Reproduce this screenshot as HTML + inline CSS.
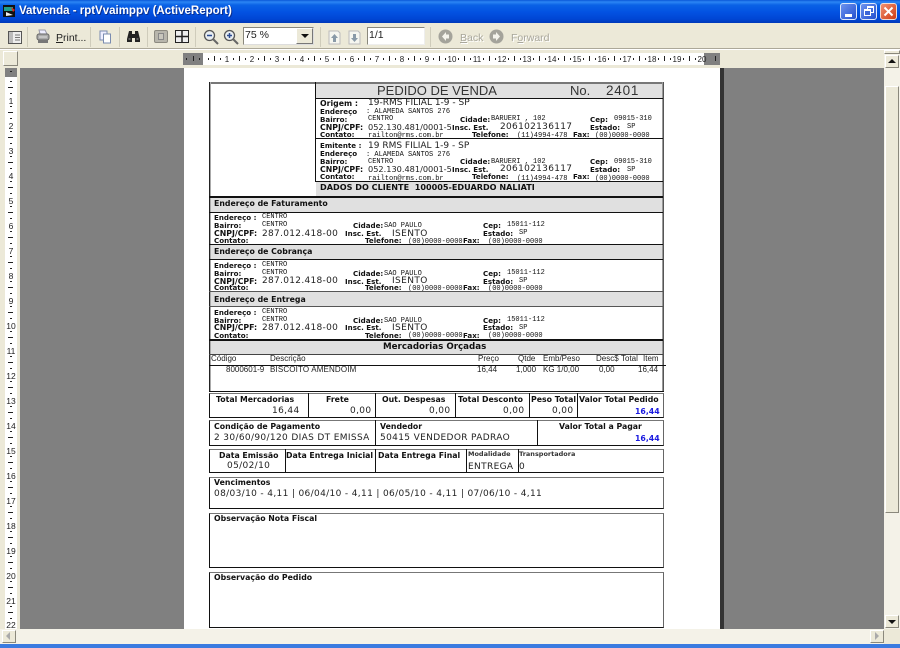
<!DOCTYPE html>
<html><head><meta charset="utf-8"><style>
html,body{margin:0;padding:0}
body{width:900px;height:648px;overflow:hidden;background:#ece9d8;position:relative;font-family:"Liberation Sans",sans-serif}
div,span,svg{position:absolute}
.t,.b,.r,.m,.s,.v{white-space:nowrap;height:12px;line-height:12px;color:#111}
.b{font:bold 7.8px/12px "DejaVu Sans",sans-serif;margin-top:1px}
.c{font-size:7.1px}
.h{font:bold 7.8px/12px "DejaVu Sans",sans-serif;white-space:nowrap;height:12px;color:#111;margin-top:1px}
.r{font:9px/12px "DejaVu Sans",sans-serif;color:#222;margin-top:1px}
.n{font:8.2px/12px "DejaVu Sans",sans-serif;color:#222;white-space:nowrap;height:12px}
.m{font:7px/12px "Liberation Mono",monospace;color:#111}
.s{font:9px/12px "DejaVu Sans",sans-serif;color:#222;letter-spacing:.35px}
.k{font:8px/12px "Liberation Sans",sans-serif;white-space:nowrap;height:12px;color:#222}
.g{background:#e0e0e0}
.l{background:#111}
.box{box-sizing:border-box;border:1px solid #111;border-top-color:#777;border-right-color:#666}
.tb{font:10.5px/14px "Liberation Sans",sans-serif;color:#222;white-space:nowrap}
.sep{width:1px;height:20px;top:27px;background:#cfccbb}
.btn{box-sizing:border-box;background:#ece9d8;border:1px solid #fff;border-right-color:#8a887c;border-bottom-color:#8a887c}
.dith{background:#f4f2e8}
</style></head><body>

<!-- title bar -->
<div style="left:0;top:0;width:900px;height:23px;background:linear-gradient(#0a58d8 0,#2b86f4 2px,#0a62e6 5px,#0352e2 12px,#0046d4 19px,#0038b8 23px)"></div>
<svg style="left:3px;top:4px" width="14" height="14" viewBox="0 0 14 14"><rect x="0" y="1" width="12" height="12" fill="#111"/><path d="M1 3h9v4H1z" fill="#1f9e8a"/><path d="M3 8l7 3-7 1z" fill="#eee"/><path d="M8 3l4 3-2 2z" fill="#d22"/></svg>
<div style="left:19px;top:4px;height:15px;font:bold 11.5px/15px 'Liberation Sans',sans-serif;color:#fff;white-space:nowrap;text-shadow:1px 1px 0 #0a2f90">Vatvenda - rptVvaimppv (ActiveReport)</div>
<div style="left:840px;top:3px;width:17px;height:17px;box-sizing:border-box;border:1px solid #dfe8fb;border-radius:3px;background:linear-gradient(135deg,#6d93ee,#2450cf)"><div style="left:4px;top:10px;width:7px;height:3px;background:#fff"></div></div>
<div style="left:860px;top:3px;width:17px;height:17px;box-sizing:border-box;border:1px solid #dfe8fb;border-radius:3px;background:linear-gradient(135deg,#6d93ee,#2450cf)"><div style="left:6px;top:2px;width:7px;height:7px;box-sizing:border-box;border:1px solid #fff;border-top-width:2px"></div><div style="left:3px;top:5px;width:7px;height:7px;box-sizing:border-box;border:1px solid #fff;border-top-width:2px;background:#3c66d8"></div></div>
<div style="left:880px;top:3px;width:17px;height:17px;box-sizing:border-box;border:1px solid #f0dcd4;border-radius:3px;background:linear-gradient(135deg,#ee9070,#d23c14)"><svg style="left:2px;top:2px" width="11" height="11" viewBox="0 0 11 11"><path d="M1.5 1.5l8 8M9.500 1.500l-8 8" stroke="#fff" stroke-width="2"/></svg></div>

<!-- toolbar -->
<div style="left:0;top:23px;width:900px;height:26px;background:#ece9d8"></div>
<div style="left:0;top:48px;width:900px;height:1px;background:#aca899"></div>
<div style="left:0;top:49px;width:900px;height:1px;background:#fff"></div>
<svg style="left:8px;top:31px" width="14" height="13" viewBox="0 0 14 13"><rect x=".5" y=".5" width="13" height="12" fill="#eee" stroke="#555"/><rect x="1" y="1" width="4" height="11" fill="#bbb"/><path d="M7 4h5M7 6.500h5M7 9h5" stroke="#777"/></svg>
<div class="sep" style="left:27px"></div>
<svg style="left:36px;top:29px" width="14" height="16" viewBox="0 0 14 16"><path d="M3 1h6l2 4H4z" fill="#eef" stroke="#99a"/><rect x="1" y="5" width="12" height="6" rx="2" fill="#aaa" stroke="#666"/><path d="M2 11h10v3H2z" fill="#777"/><path d="M3 8h8" stroke="#ddd"/></svg>
<div class="tb" style="left:56px;top:31px"><u>P</u>rint...</div>
<div class="sep" style="left:90px"></div>
<svg style="left:99px;top:30px" width="13" height="14" viewBox="0 0 13 14"><rect x="1" y="1" width="7" height="9" fill="#eef" stroke="#7a8cb0"/><rect x="4.500" y="4" width="7" height="9" fill="#fff" stroke="#7a8cb0"/></svg>
<div class="sep" style="left:119px"></div>
<svg style="left:126px;top:30px" width="15" height="13" viewBox="0 0 15 13"><path d="M3 1h3v3h3V1h3l2 8v3H9V8H6v4H1V9z" fill="#222"/><path d="M2.500 9h2M10.500 9h2" stroke="#999"/></svg>
<div class="sep" style="left:147px"></div>
<div style="left:154px;top:30px;width:14px;height:13px;box-sizing:border-box;background:#b8b6ac;border:1px solid #8c8a80;border-radius:2px"><div style="left:3px;top:2px;width:6px;height:7px;border:1px solid #888;box-sizing:border-box;background:#c8c6bc"></div></div>
<svg style="left:175px;top:30px" width="14" height="13" viewBox="0 0 14 13"><rect x=".5" y=".5" width="13" height="12" fill="#eee" stroke="#222"/><path d="M7 1v11M1 6.500h12" stroke="#222" stroke-width="1.500"/></svg>
<div class="sep" style="left:195px"></div>
<svg style="left:203px;top:29px" width="16" height="16" viewBox="0 0 16 16"><circle cx="6.500" cy="6.500" r="5" fill="#e8edf0" stroke="#555" stroke-width="1.300"/><path d="M10 10l5 5" stroke="#666" stroke-width="2"/><path d="M4 6.500h5" stroke="#2b4a90" stroke-width="1.500"/></svg>
<svg style="left:223px;top:29px" width="16" height="16" viewBox="0 0 16 16"><circle cx="6.500" cy="6.500" r="5" fill="#e8edf0" stroke="#555" stroke-width="1.300"/><path d="M10 10l5 5" stroke="#666" stroke-width="2"/><path d="M4 6.500h5M6.500 4v5" stroke="#2b4a90" stroke-width="1.500"/></svg>
<div style="left:243px;top:27px;width:71px;height:18px;box-sizing:border-box;background:#fff;border:1px solid #8a887c;border-right-color:#ddd;border-bottom-color:#ddd"><div class="tb" style="left:1px;top:0">75 %</div><div style="right:0;top:0;width:17px;height:16px;background:#ece9d8;box-sizing:border-box;border:1px solid #fff;border-right-color:#777;border-bottom-color:#777"></div><div style="right:4px;top:6px;width:0;height:0;border:4px solid transparent;border-top:4px solid #111"></div></div>
<div class="sep" style="left:320px"></div>
<svg style="left:328px;top:30px" width="13" height="15" viewBox="0 0 13 15"><path d="M1 1h9l2 2v11H1z" fill="#f6f6f0" stroke="#bbb"/><path d="M6.500 4L3 8h2v4h3V8h2z" fill="#8a9aa8"/></svg>
<svg style="left:348px;top:30px" width="13" height="15" viewBox="0 0 13 15"><path d="M1 1h9l2 2v11H1z" fill="#f6f6f0" stroke="#bbb"/><path d="M6.500 12L3 8h2V4h3v4h2z" fill="#8a9aa8"/></svg>
<div style="left:367px;top:27px;width:58px;height:18px;box-sizing:border-box;background:#fff;border:1px solid #8a887c;border-right-color:#eee;border-bottom-color:#eee"><div class="tb" style="left:1px;top:0">1/1</div></div>
<div class="sep" style="left:430px"></div>
<svg style="left:438px;top:29px" width="15" height="15" viewBox="0 0 15 15"><circle cx="7.500" cy="7.500" r="7" fill="#a4a39b"/><path d="M8 3L4 7.500 8 12V9.500h3v-4H8z" fill="#f4f3ec"/></svg>
<div class="tb" style="left:460px;top:31px;color:#a9a79b;text-shadow:1px 1px 0 #fff"><u>B</u>ack</div>
<svg style="left:489px;top:29px" width="15" height="15" viewBox="0 0 15 15"><circle cx="7.500" cy="7.500" r="7" fill="#a4a39b"/><path d="M7 3l4 4.500L7 12V9.500H4v-4h3z" fill="#f4f3ec"/></svg>
<div class="tb" style="left:511px;top:31px;color:#a9a79b;text-shadow:1px 1px 0 #fff">F<u>o</u>rward</div>

<!-- rulers -->
<div class="btn" style="left:3px;top:51px;width:15px;height:15px"></div>
<svg style="left:183px;top:53px" width="537" height="12" viewBox="0 0 537 12" font-family="Liberation Sans" font-size="8" fill="#222" text-anchor="middle">
<defs><pattern id="p" x="19" y="0" width="25" height="12" patternUnits="userSpaceOnUse"><rect x="6" y="5" width="1" height="2" fill="#222"/><rect x="12" y="3" width="1" height="5" fill="#222"/><rect x="18" y="5" width="1" height="2" fill="#222"/></pattern></defs>
<rect width="537" height="12" fill="#fff"/><rect width="537" height="12" fill="url(#p)"/>
<rect x="0" width="20" height="12" fill="#808080"/><rect x="521" width="16" height="12" fill="#808080"/>
<path d="M3 5h1v2H3zM10 3h1v5h-1zM16 5h1v2h-1zM532 3h1v5h-1z" fill="#222"/>
<text x="44" y="9">1</text><text x="69" y="9">2</text><text x="94" y="9">3</text><text x="119" y="9">4</text><text x="144" y="9">5</text><text x="169" y="9">6</text><text x="194" y="9">7</text><text x="219" y="9">8</text><text x="244" y="9">9</text><text x="269" y="9">10</text><text x="294" y="9">11</text><text x="319" y="9">12</text><text x="344" y="9">13</text><text x="369" y="9">14</text><text x="394" y="9">15</text><text x="419" y="9">16</text><text x="444" y="9">17</text><text x="469" y="9">18</text><text x="494" y="9">19</text><text x="519" y="9">20</text></svg>
<svg style="left:5px;top:68px" width="12" height="561" viewBox="0 0 12 561" font-family="Liberation Sans" font-size="8.500" fill="#222" text-anchor="middle">
<defs><pattern id="q" x="0" y="7" width="12" height="25" patternUnits="userSpaceOnUse"><rect x="5" y="6" width="2" height="1" fill="#222"/><rect x="3" y="12" width="5" height="1" fill="#222"/><rect x="5" y="18" width="2" height="1" fill="#222"/></pattern></defs>
<rect width="12" height="561" fill="#fff"/><rect width="12" height="561" fill="url(#q)"/><rect width="12" height="9" fill="#808080"/><rect x="5" y="3" width="2" height="1" fill="#222"/>
<text x="6" y="36">1</text><text x="6" y="61">2</text><text x="6" y="86">3</text><text x="6" y="111">4</text><text x="6" y="136">5</text><text x="6" y="161">6</text><text x="6" y="186">7</text><text x="6" y="211">8</text><text x="6" y="236">9</text><text x="6" y="261">10</text><text x="6" y="286">11</text><text x="6" y="311">12</text><text x="6" y="336">13</text><text x="6" y="361">14</text><text x="6" y="386">15</text><text x="6" y="411">16</text><text x="6" y="436">17</text><text x="6" y="461">18</text><text x="6" y="486">19</text><text x="6" y="511">20</text><text x="6" y="536">21</text><text x="6" y="560">22</text></svg>

<!-- viewport -->
<div style="left:20px;top:68px;width:864px;height:561px;background:#808080"></div>
<div style="left:184px;top:68px;width:536px;height:561px;background:#fff"></div>
<div style="left:720px;top:68px;width:4px;height:561px;background:#333"></div>

<!-- report frame -->
<div class="g" style="left:315px;top:83px;width:348px;height:15px"></div>
<div style="left:209px;top:82px;width:455px;height:2px;background:#777"></div>
<div style="left:209px;top:82px;width:1px;height:310px;background:#222"></div>
<div style="left:210px;top:82px;width:1px;height:310px;background:#aaa"></div>
<div style="left:662px;top:82px;width:1px;height:310px;background:#999"></div>
<div style="left:663px;top:82px;width:1px;height:310px;background:#555"></div>
<div style="left:315px;top:82px;width:1px;height:100px;background:#111"></div>
<div class="l" style="left:315px;top:98px;width:348px;height:1px"></div>
<div class="t" style="left:377px;top:83px;height:15px;font:13px/15px 'Liberation Sans',sans-serif;color:#333">PEDIDO DE VENDA</div>
<div class="t" style="left:570px;top:83px;height:15px;font:13px/15px 'Liberation Sans',sans-serif;color:#333">No.</div>
<div class="t" style="left:606px;top:83px;height:15px;font:13.500px/15px 'Liberation Sans',sans-serif;color:#333;letter-spacing:.8px">2401</div>

<!-- origem -->
<div class="b" style="left:320px;top:97px">Origem :</div><div class="r" style="left:368px;top:96px">19-RMS FILIAL 1-9 - SP</div>
<div class="b c" style="left:320px;top:105px">Endereço</div><div class="m" style="left:366px;top:106px">: ALAMEDA SANTOS 276</div>
<div class="b c" style="left:320px;top:113px">Bairro:</div><div class="m" style="left:368px;top:113px">CENTRO</div>
<div class="b c" style="left:460px;top:113px">Cidade:</div><div class="m" style="left:491px;top:113px">BARUERI , 102</div>
<div class="b c" style="left:590px;top:113px">Cep:</div><div class="m" style="left:614px;top:113px">09015-310</div>
<div class="b" style="left:320px;top:121px">CNPJ/CPF:</div><div class="n" style="left:368px;top:121px">052.130.481/0001-5</div>
<div class="b c" style="left:452px;top:121px">Insc. Est.</div><div class="r" style="left:500px;top:120px;letter-spacing:.3px">206102136117</div>
<div class="b c" style="left:590px;top:121px">Estado:</div><div class="m" style="left:627px;top:121px">SP</div>
<div style="left:316px;top:128px;width:347px;height:10px;overflow:hidden"><div class="b c" style="left:4px;top:0">Contato:</div><div class="m" style="left:52px;top:2px">railton@rms.com.br</div><div class="b c" style="left:156px;top:0">Telefone:</div><div class="m" style="left:201px;top:2px">(11)4994-478</div><div class="b c" style="left:257px;top:0">Fax:</div><div class="m" style="left:279px;top:2px">(00)0000-0000</div></div>
<div class="l" style="left:316px;top:138px;width:347px;height:1px"></div>
<!-- emitente -->
<div class="b c" style="left:320px;top:139px">Emitente :</div><div class="r" style="left:368px;top:139px">19 RMS FILIAL 1-9 - SP</div>
<div class="b c" style="left:320px;top:147px">Endereço</div><div class="m" style="left:366px;top:149px">: ALAMEDA SANTOS 276</div>
<div class="b c" style="left:320px;top:155px">Bairro:</div><div class="m" style="left:368px;top:156px">CENTRO</div>
<div class="b c" style="left:460px;top:155px">Cidade:</div><div class="m" style="left:491px;top:156px">BARUERI , 102</div>
<div class="b c" style="left:590px;top:155px">Cep:</div><div class="m" style="left:614px;top:156px">09015-310</div>
<div class="b" style="left:320px;top:163px">CNPJ/CPF:</div><div class="n" style="left:368px;top:163px">052.130.481/0001-5</div>
<div class="b c" style="left:452px;top:163px">Insc. Est.</div><div class="r" style="left:500px;top:162px;letter-spacing:.3px">206102136117</div>
<div class="b c" style="left:590px;top:163px">Estado:</div><div class="m" style="left:627px;top:164px">SP</div>
<div style="left:316px;top:170px;width:347px;height:11px;overflow:hidden"><div class="b c" style="left:4px;top:0">Contato:</div><div class="m" style="left:52px;top:3px">railton@rms.com.br</div><div class="b c" style="left:156px;top:0">Telefone:</div><div class="m" style="left:201px;top:3px">(11)4994-478</div><div class="b c" style="left:257px;top:0">Fax:</div><div class="m" style="left:279px;top:3px">(00)0000-0000</div></div>

<div class="g" style="left:316px;top:181px;width:346px;height:15px"></div>
<div class="l" style="left:316px;top:181px;width:347px;height:1px"></div>
<div class="h" style="left:320px;top:181px;line-height:13px;margin-top:0;font-size:8.100px">DADOS DO CLIENTE&nbsp; 100005-EDUARDO NALIATI</div>

<div class="l" style="left:209px;top:196px;width:454px;height:2px"></div>
<div class="g" style="left:211px;top:198px;width:451px;height:14px"></div>
<div class="l" style="left:209px;top:212px;width:454px;height:1px"></div>
<div class="h" style="left:214px;top:197px">Endereço de Faturamento</div>
<div class="b c" style="left:214px;top:211px">Endereço&nbsp;:</div><div class="m" style="left:262px;top:211px">CENTRO</div>
<div class="b c" style="left:214px;top:219px">Bairro:</div><div class="m" style="left:262px;top:219px">CENTRO</div>
<div class="b c" style="left:353px;top:219px">Cidade:</div><div class="m" style="left:384px;top:220px">SAO PAULO</div>
<div class="b c" style="left:483px;top:219px">Cep:</div><div class="m" style="left:507px;top:219px">15011-112</div>
<div class="b" style="left:214px;top:227px">CNPJ/CPF:</div><div class="r" style="left:262px;top:227px;letter-spacing:.3px">287.012.418-00</div>
<div class="b c" style="left:345px;top:227px">Insc. Est.</div><div class="r" style="left:392px;top:227px;letter-spacing:.4px">ISENTO</div>
<div class="b c" style="left:483px;top:227px">Estado:</div><div class="m" style="left:519px;top:227px">SP</div>
<div style="left:211px;top:236px;width:451px;height:8px;overflow:hidden"><div class="b c" style="left:3px;top:-2px">Contato:</div><div class="b c" style="left:154px;top:-2px">Telefone:</div><div class="m" style="left:197px;top:0">(00)0000-0000</div><div class="b c" style="left:252px;top:-2px">Fax:</div><div class="m" style="left:277px;top:0">(00)0000-0000</div></div>

<div class="l" style="left:209px;top:244px;width:454px;height:1px"></div>
<div class="g" style="left:211px;top:245px;width:451px;height:14px"></div>
<div class="l" style="left:209px;top:259px;width:454px;height:1px"></div>
<div class="h" style="left:214px;top:245px">Endereço de Cobrança</div>
<div class="b c" style="left:214px;top:259px">Endereço&nbsp;:</div><div class="m" style="left:262px;top:259px">CENTRO</div>
<div class="b c" style="left:214px;top:267px">Bairro:</div><div class="m" style="left:262px;top:267px">CENTRO</div>
<div class="b c" style="left:353px;top:267px">Cidade:</div><div class="m" style="left:384px;top:268px">SAO PAULO</div>
<div class="b c" style="left:483px;top:267px">Cep:</div><div class="m" style="left:507px;top:267px">15011-112</div>
<div class="b" style="left:214px;top:275px">CNPJ/CPF:</div><div class="r" style="left:262px;top:274px;letter-spacing:.3px">287.012.418-00</div>
<div class="b c" style="left:345px;top:275px">Insc. Est.</div><div class="r" style="left:392px;top:274px;letter-spacing:.4px">ISENTO</div>
<div class="b c" style="left:483px;top:275px">Estado:</div><div class="m" style="left:519px;top:275px">SP</div>
<div style="left:211px;top:284px;width:451px;height:8px;overflow:hidden"><div class="b c" style="left:3px;top:-3px">Contato:</div><div class="b c" style="left:154px;top:-3px">Telefone:</div><div class="m" style="left:197px;top:-1px">(00)0000-0000</div><div class="b c" style="left:252px;top:-3px">Fax:</div><div class="m" style="left:277px;top:-1px">(00)0000-0000</div></div>

<div style="left:209px;top:291px;width:454px;height:1px;background:#555"></div>
<div class="g" style="left:211px;top:292px;width:451px;height:15px"></div>
<div style="left:209px;top:306px;width:454px;height:1px;background:#555"></div>
<div class="h" style="left:214px;top:293px">Endereço de Entrega</div>
<div class="b c" style="left:214px;top:306px">Endereço&nbsp;:</div><div class="m" style="left:262px;top:306px">CENTRO</div>
<div class="b c" style="left:214px;top:314px">Bairro:</div><div class="m" style="left:262px;top:314px">CENTRO</div>
<div class="b c" style="left:353px;top:314px">Cidade:</div><div class="m" style="left:384px;top:315px">SAO PAULO</div>
<div class="b c" style="left:483px;top:314px">Cep:</div><div class="m" style="left:507px;top:314px">15011-112</div>
<div class="b" style="left:214px;top:321px">CNPJ/CPF:</div><div class="r" style="left:262px;top:321px;letter-spacing:.3px">287.012.418-00</div>
<div class="b c" style="left:345px;top:321px">Insc. Est.</div><div class="r" style="left:392px;top:321px;letter-spacing:.4px">ISENTO</div>
<div class="b c" style="left:483px;top:321px">Estado:</div><div class="m" style="left:519px;top:322px">SP</div>
<div style="left:211px;top:331px;width:451px;height:8px;overflow:hidden"><div class="b c" style="left:3px;top:-2px">Contato:</div><div class="b c" style="left:154px;top:-2px">Telefone:</div><div class="m" style="left:197px;top:-1px">(00)0000-0000</div><div class="b c" style="left:252px;top:-2px">Fax:</div><div class="m" style="left:277px;top:-1px">(00)0000-0000</div></div>

<div class="l" style="left:209px;top:339px;width:454px;height:2px"></div>
<div class="g" style="left:211px;top:341px;width:451px;height:13px"></div>
<div style="left:209px;top:354px;width:454px;height:1px;background:#444"></div>
<div class="h" style="left:383px;top:340px;font-size:8.700px">Mercadorias Orçadas</div>
<div class="k" style="left:211px;top:353px">Código</div><div class="k" style="left:270px;top:353px">Descrição</div>
<div class="k" style="left:478px;top:353px">Preço</div><div class="k" style="left:518px;top:353px">Qtde</div><div class="k" style="left:543px;top:353px">Emb/Peso</div><div class="k" style="left:596px;top:353px">Desc$</div><div class="k" style="left:621px;top:353px">Total</div><div class="k" style="left:643px;top:353px">Item</div>
<div class="l" style="left:209px;top:365px;width:457px;height:1px"></div>
<div class="k" style="left:226px;top:364px">8000601-9</div><div class="k" style="left:270px;top:364px;letter-spacing:.15px">BISCOITO AMENDOIM</div>
<div class="k" style="left:477px;top:364px">16,44</div><div class="k" style="left:516px;top:364px">1,000</div><div class="k" style="left:543px;top:364px">KG 1/0,00</div><div class="k" style="left:599px;top:364px">0,00</div><div class="k" style="left:638px;top:364px">16,44</div>
<div class="l" style="left:209px;top:391px;width:455px;height:1px"></div>

<!-- totals -->
<div class="box" style="left:209px;top:393px;width:455px;height:25px;background:#fff"></div>
<div class="l" style="left:308px;top:393px;width:1px;height:25px"></div><div class="l" style="left:375px;top:393px;width:1px;height:25px"></div><div class="l" style="left:455px;top:393px;width:1px;height:25px"></div><div class="l" style="left:529px;top:393px;width:1px;height:25px"></div><div class="l" style="left:577px;top:393px;width:1px;height:25px"></div>
<div class="b" style="left:216px;top:393px">Total Mercadorias</div><div class="b" style="left:326px;top:393px">Frete</div><div class="b" style="left:382px;top:393px">Out. Despesas</div><div class="b" style="left:458px;top:393px">Total Desconto</div><div class="b" style="left:531px;top:393px">Peso Total</div><div class="b" style="left:579px;top:393px">Valor Total Pedido</div>
<div class="s" style="left:272px;top:405px">16,44</div><div class="s" style="left:350px;top:405px">0,00</div><div class="s" style="left:429px;top:405px">0,00</div><div class="s" style="left:503px;top:405px">0,00</div><div class="s" style="left:552px;top:405px">0,00</div><div class="b" style="left:635px;top:405px;color:#1a1ae0">16,44</div>

<div class="box" style="left:209px;top:420px;width:455px;height:26px"></div>
<div class="l" style="left:375px;top:420px;width:1px;height:26px"></div><div class="l" style="left:537px;top:420px;width:1px;height:26px"></div>
<div class="b" style="left:214px;top:420px">Condição de Pagamento</div><div class="b" style="left:380px;top:420px">Vendedor</div><div class="b" style="left:559px;top:420px">Valor Total a Pagar</div>
<div class="s" style="left:214px;top:432px">2 30/60/90/120 DIAS DT EMISSA</div><div class="s" style="left:380px;top:432px">50415 VENDEDOR PADRAO</div><div class="b" style="left:635px;top:432px;color:#1a1ae0">16,44</div>

<div class="box" style="left:209px;top:449px;width:455px;height:24px"></div>
<div class="l" style="left:285px;top:449px;width:1px;height:24px"></div><div class="l" style="left:375px;top:449px;width:1px;height:24px"></div><div class="l" style="left:466px;top:449px;width:1px;height:24px"></div><div class="l" style="left:518px;top:449px;width:1px;height:24px"></div>
<div class="b" style="left:219px;top:449px">Data Emissão</div><div class="b" style="left:286px;top:449px">Data Entrega Inicial</div><div class="b" style="left:378px;top:449px">Data Entrega Final</div><div class="b" style="left:468px;top:447px;font-size:6.500px;color:#333">Modalidade</div><div class="b" style="left:519px;top:447px;font-size:6.500px;color:#333">Transportadora</div>
<div class="s" style="left:227px;top:460px">05/02/10</div><div class="s" style="left:468px;top:461px">ENTREGA</div><div class="s" style="left:519px;top:461px">0</div>

<div class="box" style="left:209px;top:477px;width:455px;height:32px"></div>
<div class="b" style="left:214px;top:476px">Vencimentos</div>
<div class="s" style="left:214px;top:488px">08/03/10 - 4,11 | 06/04/10 - 4,11 | 06/05/10 - 4,11 | 07/06/10 - 4,11</div>

<div class="box" style="left:209px;top:513px;width:455px;height:55px"></div>
<div class="b" style="left:214px;top:512px">Observação Nota Fiscal</div>
<div class="box" style="left:209px;top:572px;width:455px;height:56px"></div>
<div class="b" style="left:214px;top:571px">Observação do Pedido</div>

<!-- right scrollbar -->
<div class="dith" style="left:884px;top:50px;width:16px;height:579px"></div>
<div class="btn" style="left:884px;top:50px;width:16px;height:4px"></div>
<div class="btn" style="left:885px;top:55px;width:14px;height:13px"></div>
<div style="left:888px;top:59px;width:0;height:0;border:4px solid transparent;border-bottom:4px solid #111;border-top:0"></div>
<div class="btn" style="left:885px;top:86px;width:14px;height:427px"></div>
<div class="btn" style="left:885px;top:615px;width:14px;height:13px"></div>
<div style="left:888px;top:620px;width:0;height:0;border:4px solid transparent;border-top:4px solid #111;border-bottom:0"></div>

<!-- bottom scrollbar -->
<div class="dith" style="left:0;top:629px;width:884px;height:15px"></div>
<div class="btn" style="left:2px;top:630px;width:14px;height:13px"></div>
<div style="left:6px;top:632px;width:0;height:0;border:4px solid transparent;border-right:4px solid #aaa;border-left:0"></div>
<div class="btn" style="left:870px;top:630px;width:14px;height:13px"></div>
<div style="left:875px;top:632px;width:0;height:0;border:4px solid transparent;border-left:4px solid #aaa;border-right:0"></div>
<div style="left:884px;top:629px;width:16px;height:15px;background:#ece9d8"></div>
<div style="left:0;top:644px;width:900px;height:4px;background:#3a7be0"></div>
</body></html>
